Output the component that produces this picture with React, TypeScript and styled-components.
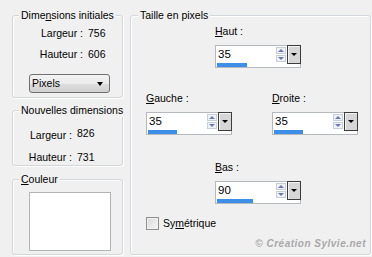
import React from "react";
import styled, { createGlobalStyle } from "styled-components";

const Global = createGlobalStyle`
  html, body { margin: 0; padding: 0; background: #f0f0f0; }
  body { font-family: "Liberation Sans", Arial, sans-serif; color: #000; }
`;

const Window = styled.div`
  width: 372px;
  height: 257px;
  box-sizing: border-box;
  display: flex;
  align-items: flex-start;
  gap: 7px;
  padding: 15px 0 0 12px;
  background: #f0f0f0;
  overflow: hidden;
  font-family: "Liberation Sans", Arial, sans-serif;
  font-size: 10.5px;
  line-height: 13px;
`;

const LeftColumn = styled.div`
  width: 111px;
  display: flex;
  flex-direction: column;
`;

const Group = styled.div<{ $mt?: number; $h: number; $w?: number }>`
  box-sizing: border-box;
  flex: none;
  width: ${(p) => (p.$w ? `${p.$w}px` : "auto")};
  height: ${(p) => p.$h}px;
  margin-top: ${(p) => p.$mt ?? 0}px;
  border: 1px solid #d3d6da;
  border-radius: 3px;
  box-shadow: inset 1px 1px 0 #fff, 1px 1px 0 #fff;
  display: flex;
  flex-direction: column;
`;

const Title = styled.div<{ $ml?: number }>`
  align-self: flex-start;
  margin: -7px 0 0 ${(p) => p.$ml ?? 6}px;
  padding: 0 2px;
  background: #f0f0f0;
  white-space: nowrap;
`;

const InfoGrid = styled.div<{ $labelW: number; $mt: number; $gap: number }>`
  display: grid;
  grid-template-columns: ${(p) => p.$labelW}px auto;
  column-gap: 5px;
  row-gap: ${(p) => p.$gap}px;
  margin-top: ${(p) => p.$mt}px;
`;

const InfoLabel = styled.div`
  text-align: right;
  white-space: nowrap;
`;

const InfoValue = styled.div<{ $raise?: number }>`
  white-space: nowrap;
  transform: translateY(${(p) => -(p.$raise ?? 0)}px);
`;

const Select = styled.div`
  box-sizing: border-box;
  width: 81px;
  height: 19px;
  margin: 13px 0 0 16px;
  border: 1px solid #707070;
  border-radius: 3px;
  background: linear-gradient(#f3f3f3 0%, #ebebeb 50%, #dedede 51%, #d0d0d0 100%);
  display: flex;
  align-items: center;
  justify-content: space-between;
  padding: 0 6px 0 2px;
`;

const DownTriangle = styled.span<{ $size?: number }>`
  width: 0;
  height: 0;
  border-left: ${(p) => p.$size ?? 3.5}px solid transparent;
  border-right: ${(p) => p.$size ?? 3.5}px solid transparent;
  border-top: ${(p) => (p.$size ?? 3.5) + 0.5}px solid #000;
`;

const Swatch = styled.div`
  box-sizing: border-box;
  width: 82px;
  height: 59px;
  margin: 6px 0 0 16px;
  background: #fff;
  border: 1px solid #b4b4b4;
`;

const RightGroup = styled(Group)`
  width: 241px;
`;

const FieldRow = styled.div<{ $mt: number; $pl: number; $gap?: number }>`
  display: flex;
  gap: ${(p) => p.$gap ?? 0}px;
  margin-top: ${(p) => p.$mt}px;
  padding-left: ${(p) => p.$pl}px;
`;

const Field = styled.div`
  display: flex;
  flex-direction: column;
  gap: 7px;
`;

const FieldLabel = styled.div`
  white-space: nowrap;
`;

const SpinBox = styled.div`
  box-sizing: border-box;
  width: 86px;
  height: 23px;
  background: #fff;
  border: 1px solid #b5b9be;
  display: flex;
  flex-direction: column;
`;

const SpinTop = styled.div`
  display: flex;
  height: 17px;
`;

const SpinValue = styled.div`
  flex: 1;
  padding-left: 2px;
  font-size: 11.5px;
  line-height: 16px;
`;

const Arrows = styled.div`
  width: 10px;
  margin: 1px 1px 1px 0;
  display: flex;
  flex-direction: column;
  gap: 1px;
`;

const ArrowBtn = styled.div`
  flex: 1;
  box-sizing: border-box;
  border: 1px solid #c6cedc;
  background: #eef2f9;
  display: flex;
  align-items: center;
  justify-content: center;
`;

const ArrowUp = styled.span`
  width: 0;
  height: 0;
  border-left: 3px solid transparent;
  border-right: 3px solid transparent;
  border-bottom: 3px solid #6a78b8;
`;

const ArrowDown = styled.span`
  width: 0;
  height: 0;
  border-left: 3px solid transparent;
  border-right: 3px solid transparent;
  border-top: 3px solid #6a78b8;
`;

const DropBtn = styled.div`
  box-sizing: border-box;
  width: 14px;
  height: 19px;
  margin: -1px -1px 0 0;
  border: 1px solid #3c3c3c;
  background: #d6d6d6;
  box-shadow: inset 1px 1px 0 #f4f4f4;
  display: flex;
  align-items: center;
  justify-content: center;
`;

const Bar = styled.div<{ $w: number }>`
  height: 4px;
  width: ${(p) => p.$w}px;
  margin-left: 1px;
  background: #3b8fe9;
`;

const CheckRow = styled.div`
  display: flex;
  align-items: center;
  gap: 4px;
  margin: 13px 0 0 15px;
`;

const CheckBox = styled.div`
  box-sizing: border-box;
  width: 13px;
  height: 13px;
  border: 1px solid #8f8f8f;
  background: linear-gradient(135deg, #d9d9d9, #f6f6f6);
  box-shadow: inset 0 0 0 1px #f0f0f0;
`;

const Copyright = styled.div`
  margin: auto 4px 4px 0;
  align-self: flex-end;
  font-weight: bold;
  font-style: italic;
  font-size: 10px;
  color: #a8a8a8;
  letter-spacing: 0.5px;
  white-space: nowrap;
`;

type SpinProps = { label: React.ReactNode; value: string; bar: number };

const SpinField = ({ label, value, bar }: SpinProps) => (
  <Field>
    <FieldLabel>{label}</FieldLabel>
    <SpinBox>
      <SpinTop>
        <SpinValue>{value}</SpinValue>
        <Arrows>
          <ArrowBtn>
            <ArrowUp />
          </ArrowBtn>
          <ArrowBtn>
            <ArrowDown />
          </ArrowBtn>
        </Arrows>
        <DropBtn>
          <DownTriangle $size={3} />
        </DropBtn>
      </SpinTop>
      <Bar $w={bar} />
    </SpinBox>
  </Field>
);

export default function App() {
  return (
    <>
      <Global />
      <Window>
        <LeftColumn>
          <Group $h={83}>
            <Title>
              Dime<u>n</u>sions initiales
            </Title>
            <InfoGrid $labelW={70} $mt={5} $gap={8}>
              <InfoLabel>Largeur :</InfoLabel>
              <InfoValue>756</InfoValue>
              <InfoLabel>Hauteur :</InfoLabel>
              <InfoValue>606</InfoValue>
            </InfoGrid>
            <Select>
              <span>Pixels</span>
              <DownTriangle />
            </Select>
          </Group>

          <Group $h={56} $mt={12}>
            <Title>Nouvelles dimensions</Title>
            <InfoGrid $labelW={59} $mt={12} $gap={9}>
              <InfoLabel>Largeur :</InfoLabel>
              <InfoValue $raise={2}>826</InfoValue>
              <InfoLabel>Hauteur :</InfoLabel>
              <InfoValue>731</InfoValue>
            </InfoGrid>
          </Group>

          <Group $h={76} $mt={13}>
            <Title>
              <u>C</u>ouleur
            </Title>
            <Swatch />
          </Group>
        </LeftColumn>

        <RightGroup $h={240}>
          <Title $ml={7}>Taille en pixels</Title>
          <FieldRow $mt={3} $pl={84}>
            <SpinField label={<><u>H</u>aut :</>} value="35" bar={30} />
          </FieldRow>
          <FieldRow $mt={24} $pl={15} $gap={40}>
            <SpinField label={<><u>G</u>auche :</>} value="35" bar={29} />
            <SpinField label={<><u>D</u>roite :</>} value="35" bar={29} />
          </FieldRow>
          <FieldRow $mt={26} $pl={84}>
            <SpinField label={<><u>B</u>as :</>} value="90" bar={36} />
          </FieldRow>
          <CheckRow>
            <CheckBox />
            <span>
              Sy<u>m</u>étrique
            </span>
          </CheckRow>
          <Copyright>© Création Sylvie.net</Copyright>
        </RightGroup>
      </Window>
    </>
  );
}
